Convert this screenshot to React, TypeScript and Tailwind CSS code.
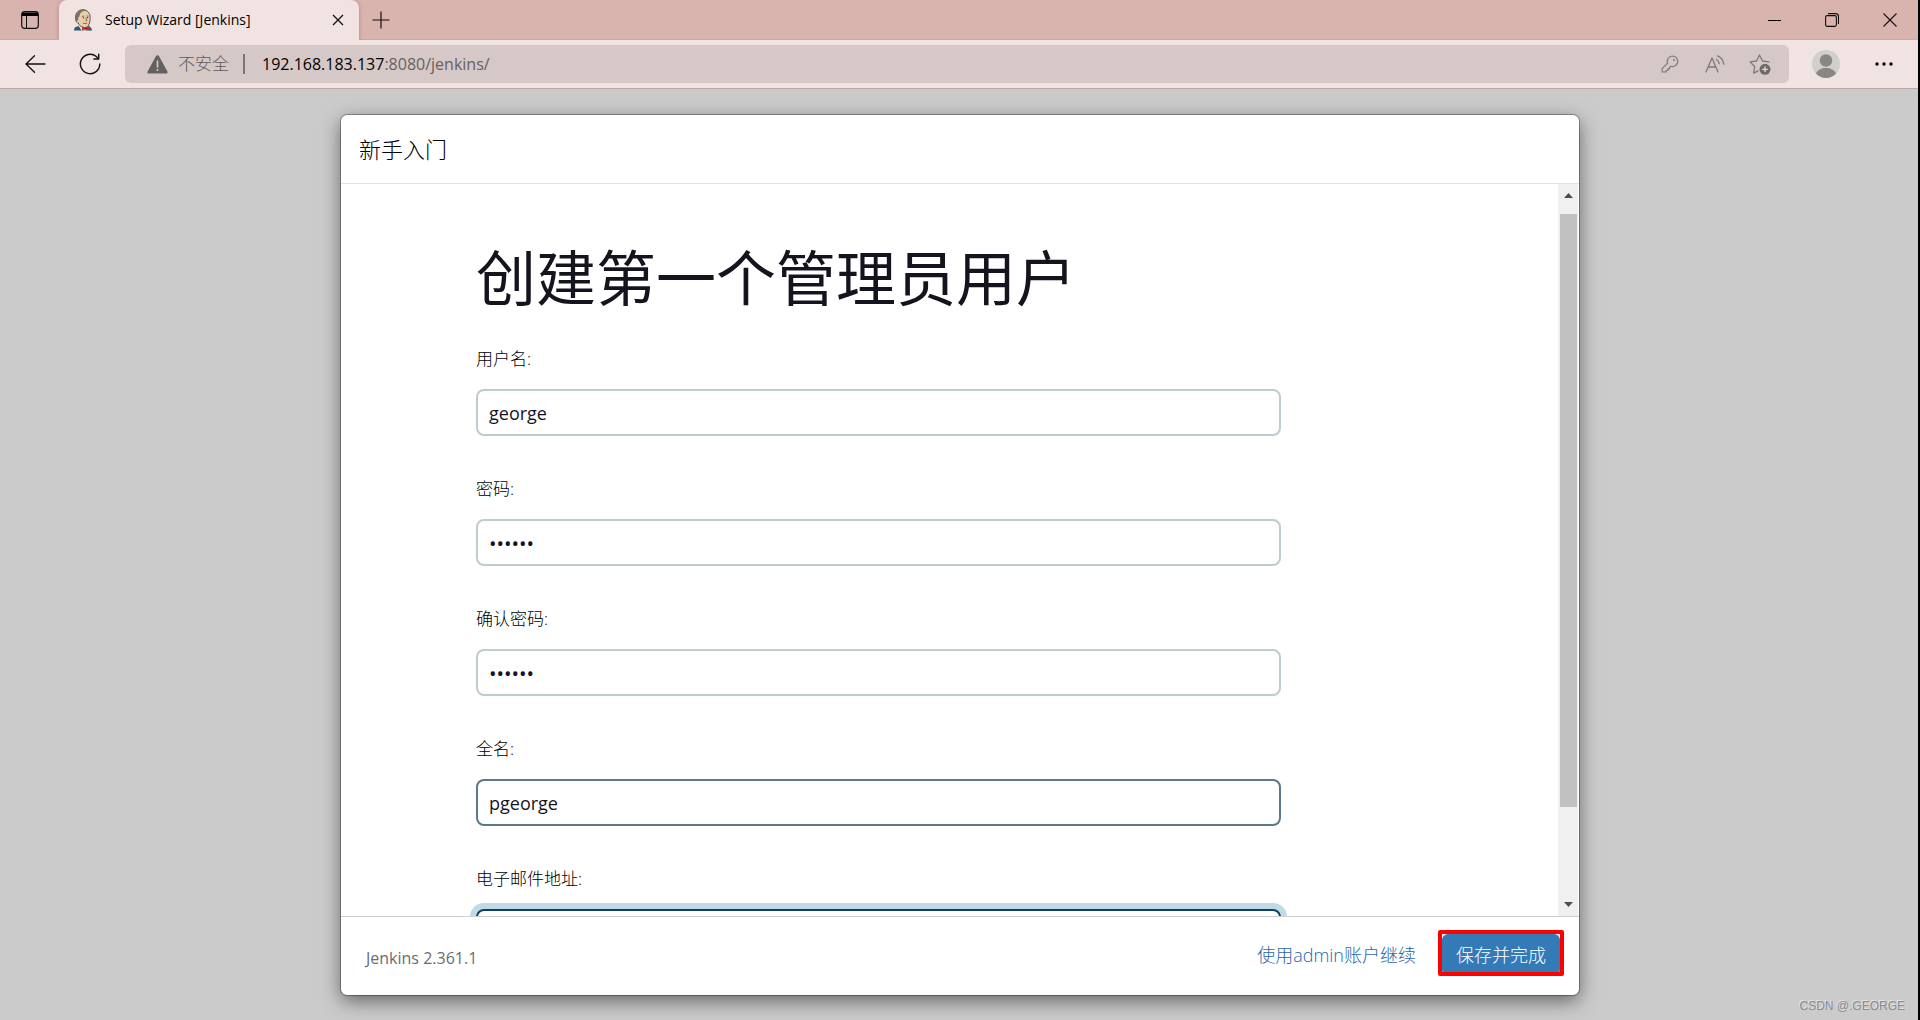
import React, { useState } from 'react';

const uiFont = "font-['Open_Sans','Noto_Sans_CJK_SC',sans-serif]";

function JenkinsIcon() {
  return <svg viewBox="0 0 20 22" className="w-5 h-[22px] flex-shrink-0" aria-hidden="true">
      <path d="M1 21.5c.2-2.600 1.200-3.800 4-4.300l9.500-.2c2.800.5 4.200 1.900 4.500 4.500z" fill="#2f5773" />
      <path d="M5.500 16.500l3 5h4.500l1.500-4.500z" fill="#f4f1ea" />
      <path d="M3.200 12.500C1.700 8.500 2.500 3.300 6.500 1.400c4.500-1.900 9 .2 10.300 4.400.8 3.600.3 7.700-1.300 10.700-1.200 2-3.700 2.600-6 1.700-2.300-.8-3.600-2.300-4.300-4.400-.9.100-1.600-.4-2-1.300z" fill="#e8cfaa" stroke="#3c3630" strokeWidth=".8" />
      <path d="M3.500 12C1.900 8.500 2.400 3.500 6.700 1.500c3-1.200 5.500-.6 7.300.7-2.500-.3-5.400.2-6.600 2-.8 1.300-.7 2.600-1.400 3.800-.9.300-.8 1.400-.5 2.300-.6.900-1.200 1.600-2 1.700z" fill="#77726a" />
      <path d="M9 7.500l2-.5M13.500 7l2 .2M12.700 8.500l1.200 3-1.500.4M10 14c1.300.8 3 .8 4.300-.2" fill="none" stroke="#6b4d37" strokeWidth=".8" />
      <circle cx="10.400" cy="8.800" r=".6" fill="#222" />
      <circle cx="14.600" cy="8.600" r=".6" fill="#222" />
      <path d="M9 17.500l4 1.500 4-2v4.500l-4-1.200-4 1.200z" fill="#d2262c" />
      <circle cx="13" cy="19.500" r="1.100" fill="#8c1418" />
    </svg>;
}

function BrowserTabs() {
  return <div className="flex h-10 bg-[#d9b3ad] shadow-[inset_0_-1px_0_#cfa8a3]">
      <button aria-label="Tab actions" className="w-[59px] flex items-center justify-center">
        <svg viewBox="0 0 18 18" className="w-[18px] h-[18px]" fill="none" stroke="#111">
          <rect x=".7" y=".7" width="16.600" height="16.600" rx="2.800" strokeWidth="1.200" />
          <path d="M1 1.500h16v3.500H1z" fill="#000" stroke="none" />
          <path d="M5.500 5v12.500" strokeWidth="1" />
        </svg>
      </button>
      <div className="w-[300px] flex items-center pl-[14px] pr-[11px] bg-[#f1e3e1] rounded-t-lg shadow-[0_0_4px_rgba(120,60,50,0.35)] [clip-path:inset(0_-6px_0_-6px)]">
        <JenkinsIcon />
        <span className="ml-3 flex-1 text-sm text-black whitespace-nowrap">Setup Wizard [Jenkins]</span>
        <button aria-label="Close tab" className="p-1">
          <svg viewBox="0 0 12 12" className="w-3 h-3" stroke="#111" strokeWidth="1.300">
            <path d="M1 1l10 10M11 1L1 11" />
          </svg>
        </button>
      </div>
      <button aria-label="New tab" className="w-[43px] flex items-center justify-center">
        <svg viewBox="0 0 18 18" className="w-[18px] h-[18px]" stroke="#111" strokeWidth="1.200">
          <path d="M9 .5v17M.5 9h17" />
        </svg>
      </button>
      <div className="ml-auto flex">
        <button aria-label="Minimize" className="w-[58px] flex items-center justify-center">
          <svg viewBox="0 0 13 13" className="w-[13px] h-[13px]" stroke="#000">
            <path d="M0 6.500h13" />
          </svg>
        </button>
        <button aria-label="Restore" className="w-[58px] flex items-center justify-center">
          <svg viewBox="0 0 14 14" className="w-[14px] h-[14px]" fill="none" stroke="#111" strokeWidth="1.100">
            <rect x=".6" y="2.600" width="10.800" height="10.800" rx="1.600" />
            <path d="M3 .6h7.500a3 3 0 0 1 3 3V11" />
          </svg>
        </button>
        <button aria-label="Close" className="w-[57px] flex items-center justify-center">
          <svg viewBox="0 0 14 14" className="w-[14px] h-[14px]" stroke="#111" strokeWidth="1.100">
            <path d="M.5.5l13 13M13.500.5l-13 13" />
          </svg>
        </button>
      </div>
    </div>;
}

function Toolbar() {
  return <div className="flex items-center h-[49px] px-[25px] bg-[#f1e3e1] border-b border-[#b9a9a7]">
      <button aria-label="Back">
        <svg viewBox="0 0 21 18" className="w-[21px] h-[18px]" fill="none" stroke="#111" strokeWidth="1.300" strokeLinecap="round" strokeLinejoin="round">
          <path d="M20 9H1M9.500.8L1 9l8.500 8.200" />
        </svg>
      </button>
      <button aria-label="Refresh" className="ml-[33px]">
        <svg viewBox="0 0 22 22" className="w-[22px] h-[22px]" fill="none" stroke="#111" strokeWidth="1.400" strokeLinecap="round" strokeLinejoin="round">
          <path d="M20.800 11a9.700 9.700 0 1 1-3.500-7.500l2.200 2.300M19.700 1.200V6h-4.800" />
        </svg>
      </button>
      <div className="ml-6 flex-1 h-[38px] flex items-center pl-[22px] pr-[18px] rounded-md bg-[#d6c8c7]">
        <svg viewBox="0 0 21 19" className="w-[21px] h-[19px]" aria-hidden="true">
          <path d="M8.900 1.200a1.800 1.800 0 0 1 3.200 0l8.300 15.200c.6 1.100 0 2.100-1.300 2.100H1.900c-1.300 0-1.900-1-1.300-2.100z" fill="#636161" />
          <path d="M10.500 6v6" stroke="#d6c8c7" strokeWidth="1.700" strokeLinecap="round" />
          <circle cx="10.500" cy="15" r="1.100" fill="#d6c8c7" />
        </svg>
        <span className="ml-[10px] text-[17px] leading-6 font-light text-[#5f5b5b]">不安全</span>
        <span className="ml-[14px] w-[2px] h-5 bg-[#7c7575]" />
        <span className="ml-[17px] text-base text-[#666060]"><span className="text-black">192.168.183.137</span>:8080/jenkins/</span>
        <div className="ml-auto flex items-center text-[#7f7979]">
          <button aria-label="Saved password">
            <svg viewBox="0 0 18 18" className="w-[18px] h-[18px]" fill="none" stroke="currentColor" strokeWidth="1.200" strokeLinejoin="round">
              <path d="M11.500 1a5.300 5.300 0 0 1 5.300 5.300 5.300 5.300 0 0 1-7 5L8.500 12.500v1.300H6.800v1.700H5.100V17H1.200v-3.400l5.400-5.400A5.300 5.300 0 0 1 11.500 1z" />
              <circle cx="13" cy="5" r="1" fill="currentColor" stroke="none" />
            </svg>
          </button>
          <button aria-label="Read aloud" className="ml-[26px]">
            <svg viewBox="0 0 20 18" className="w-5 h-[18px]" fill="none" stroke="currentColor" strokeWidth="1.300" strokeLinecap="round" strokeLinejoin="round">
              <path d="M1 17L7 3l6 14M3.200 12h7.600" />
              <path d="M11.500 4.500c1.300.8 2.400 2.400 2.700 4.200M12.500.8c3.400 1.300 5.800 4.500 6.200 8.400" />
            </svg>
          </button>
          <button aria-label="Add to favorites" className="ml-6">
            <svg viewBox="0 0 22 21" className="w-[22px] h-[21px]">
              <path d="M20 7.800l-6.500-.8L10.500 1l-3 6-6.500.9 4.700 4.600-1.100 6.700 4.400-2.300" fill="none" stroke="currentColor" strokeWidth="1.300" strokeLinecap="round" strokeLinejoin="round" />
              <circle cx="16" cy="15.300" r="5.500" fill="#6f6a6a" />
              <path d="M16 12.500v5.600M13.200 15.300h5.600" stroke="#e6dcdb" strokeWidth="1.300" />
            </svg>
          </button>
        </div>
      </div>
      <button aria-label="Profile" className="ml-[23px]">
        <svg viewBox="0 0 28 28" className="w-7 h-7">
          <circle cx="14" cy="14" r="14" fill="#d0cfcb" />
          <circle cx="14" cy="10.500" r="6.200" fill="#8a8783" />
          <path d="M4 23.500c1.500-3.600 5.500-5.500 10-5.500s8.500 1.900 10 5.500A14 14 0 0 1 14 28a14 14 0 0 1-10-4.500z" fill="#8a8783" />
        </svg>
      </button>
      <button aria-label="Settings and more" className="ml-[35px]">
        <svg viewBox="0 0 18 4" className="w-[18px] h-1">
          <circle cx="2" cy="2" r="1.700" />
          <circle cx="9" cy="2" r="1.700" />
          <circle cx="16" cy="2" r="1.700" />
        </svg>
      </button>
    </div>;
}

const fields = [
  { id: 'username', label: '用户名:', type: 'text', value: 'george', style: 'text-lg border-[#bfcbcf]' },
  { id: 'password1', label: '密码:', type: 'password', value: '123456', style: 'pt-[2px] text-xl border-[#bfcbcf]' },
  { id: 'password2', label: '确认密码:', type: 'password', value: '123456', style: 'pt-[2px] text-xl border-[#bfcbcf]' },
  { id: 'fullname', label: '全名:', type: 'text', value: 'pgeorge', style: 'text-lg border-[#5c788c]' },
  { id: 'email', label: '电子邮件地址:', type: 'text', value: '', style: 'text-lg border-[#0b4060] ring-6 ring-[#c2d9e7]' }
];

function AdminForm() {
  const [values, setValues] = useState<Record<string, string>>(Object.fromEntries(fields.map(f => [f.id, f.value])));
  return <form className="max-w-[805px] flex-1">
      <h1 className="text-6xl leading-[72px] text-[#14141f]">创建第一个管理员用户</h1>
      <div className="mt-8 space-y-10">
        {fields.map(field => <div key={field.id}>
            <label htmlFor={field.id} className="block mb-[17px] text-[17px] leading-[26px] font-light text-black">
              {field.label}
            </label>
            <input id={field.id} type={field.type} value={values[field.id]} onChange={e => setValues({ ...values, [field.id]: e.target.value })} className={`block w-full h-[47px] px-[11px] border-2 rounded-lg bg-white text-[#14141f] outline-none ${field.style}`} />
          </div>)}
      </div>
    </form>;
}

function Scrollbar() {
  return <div className="w-5 mr-px flex flex-col items-center bg-[#f0f0f0]" aria-hidden="true">
      <svg viewBox="0 0 9 5" className="mt-[9px] w-[9px] h-[5px]" fill="#4d4d4d"><path d="M4.500 0L9 5H0z" /></svg>
      <div className="mt-4 w-[17px] h-[81%] bg-[#c1c1c1]" />
      <svg viewBox="0 0 9 5" className="mt-auto mb-[9px] w-[9px] h-[5px]" fill="#4d4d4d"><path d="M4.500 5L9 0H0z" /></svg>
    </div>;
}

function SetupWizard() {
  return <div className="w-full max-w-[1238px] flex flex-col overflow-hidden bg-white rounded-md shadow-[0_6px_19px_rgba(0,0,0,0.5),0_0_0_1px_rgba(0,0,0,0.3)]">
      <div className="h-[69px] flex-shrink-0 flex items-center px-[18px] border-b border-[#e3e3e3]">
        <h4 className="text-[22px] leading-8 font-light text-black">新手入门</h4>
      </div>
      <div className="flex-1 min-h-0 flex">
        <div className="flex-1 flex overflow-hidden pt-[58px] pl-[135px] pr-10">
          <AdminForm />
        </div>
        <Scrollbar />
      </div>
      <div className="h-[79px] flex-shrink-0 flex items-center pb-[2px] pl-[25px] pr-[19px] border-t border-[#cfcfcf]">
        <span className="pt-[6px] text-base text-[#6b6b75]">Jenkins 2.361.1</span>
        <a href="#" className="ml-auto text-lg font-light text-[#1f68a8]">使用admin账户继续</a>
        <div className="ml-[26px] relative">
          <button className="block h-[42px] px-[14px] rounded-md bg-[#337ab7] text-lg font-light text-white">保存并完成</button>
          <div className="absolute -inset-x-1 -top-1 bottom-0 border-4 border-[#ff0000] rounded-xs pointer-events-none" />
        </div>
      </div>
    </div>;
}

export default function App() {
  return <div className={`h-screen flex flex-col bg-[#cbcbcb] border-r-2 border-black relative ${uiFont}`}>
      <BrowserTabs />
      <Toolbar />
      <main className="flex-1 min-h-0 flex justify-center pt-[26px] pb-[25px] pl-[2px]">
        <SetupWizard />
      </main>
      <span className="absolute right-[13px] bottom-[6px] font-['Liberation_Sans',sans-serif] text-xs text-[#8a8a8a] [text-shadow:-1px_-1px_0_#e4e4e4]">CSDN @.GEORGE</span>
    </div>;
}
